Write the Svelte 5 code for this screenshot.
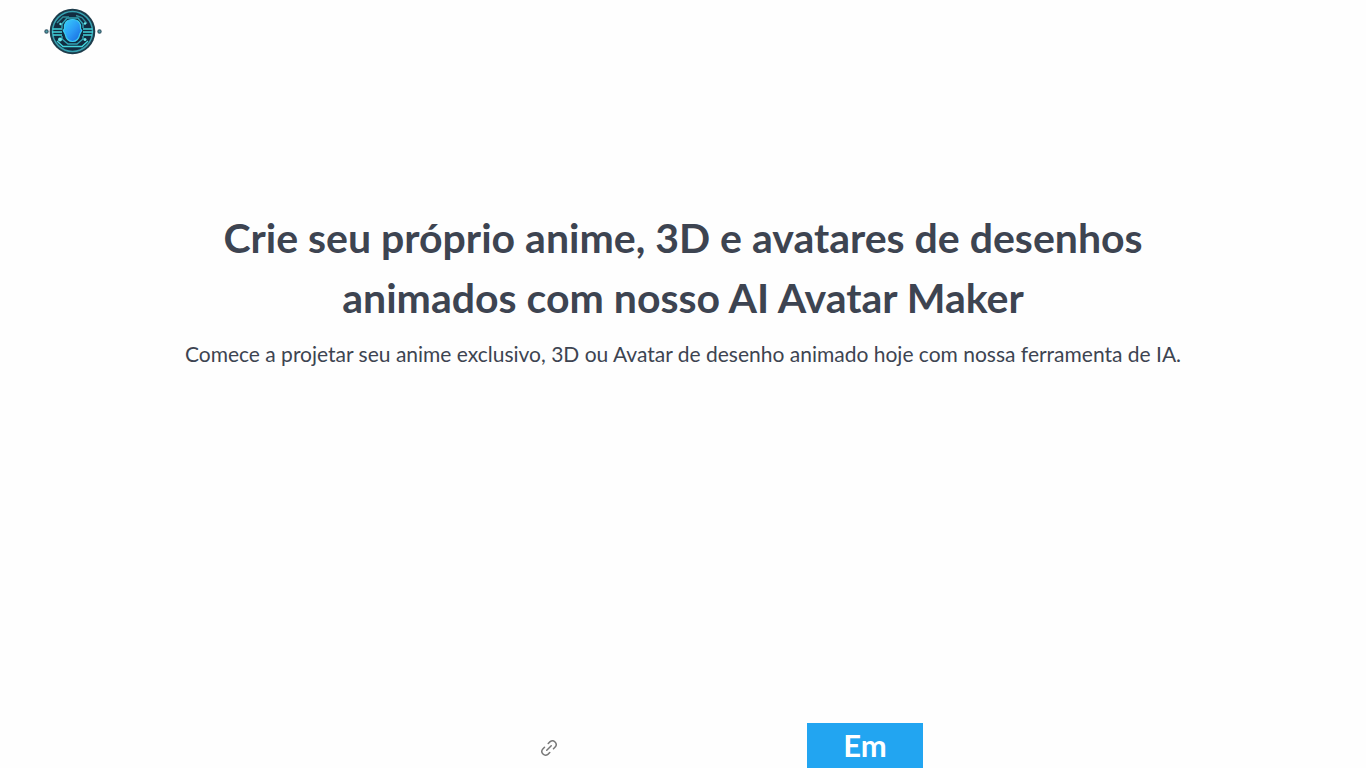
<script lang="ts">
	const title = 'Crie seu próprio anime, 3D e avatares de desenhos animados com nosso AI Avatar Maker';
	const subtitle =
		'Comece a projetar seu anime exclusivo, 3D ou Avatar de desenho animado hoje com nossa ferramenta de IA.';
</script>

<div class="page">
	<header class="topbar">
		<a class="brand" href="/" aria-label="AI Avatar Maker">
			<svg viewBox="0 0 60 48" width="60" height="48" aria-hidden="true">
				<defs>
					<linearGradient id="face" x1="0" y1="0" x2="1" y2="1">
						<stop offset="0" stop-color="#38d0fa" />
						<stop offset="0.5" stop-color="#2b9df5" />
						<stop offset="1" stop-color="#1762dc" />
					</linearGradient>
				</defs>
				<circle cx="29.5" cy="23.5" r="22.8" fill="#1d3c4b" />
				<circle cx="29.5" cy="23.5" r="20" fill="#122c40" stroke="#36a0b0" stroke-width="1.5" />
				<g fill="none" stroke="#43d4dc" stroke-width="1.4">
					<path d="M9.5 21h10M9 24h10M10 27h9M40 21h9.5M40 24h10M40 27h9" />
					<path d="M19 20v-4l5-6h11l5 6v4M19 28v3l6 5h9l6-5v-3" stroke="#2fa3b4" />
					<path d="M14 33l6 5.500h19l6-5.500" />
					<path d="M14 15l6-6h6M33 7.500l6 2 5 6" stroke="#318f9c" />
				</g>
				<path
					d="M29.500 11.500c-6 0-8.800 4-8 9l-1.200 2 1.800 3.500c1 4.500 3.600 7.500 7.400 7.500s6.400-3 7.400-7.500l1.800-3.500-1.200-2c.8-5-2-9-8-9z"
					fill="url(#face)"
					stroke="#3bcdf0"
					stroke-width="1.2"
				/>
				<g fill="#6ae8e8">
					<circle cx="17" cy="31.5" r="2" />
					<circle cx="42" cy="31.5" r="1.5" />
					<circle cx="17.5" cy="16" r="1.2" />
					<circle cx="42" cy="15.5" r="1.2" />
				</g>
				<g fill="#4aa5ac" stroke="#36596a" stroke-width="1.2">
					<circle cx="3.5" cy="23.5" r="1.6" />
					<circle cx="56.5" cy="23.5" r="1.6" />
				</g>
			</svg>
		</a>
	</header>

	<main class="hero">
		<h1>{title}</h1>
		<p>{subtitle}</p>
	</main>

	<div class="create-bar">
		<button type="button" class="link-button" aria-label="Link">
			<svg viewBox="0 0 24 24" width="18" height="18" aria-hidden="true">
				<path
					d="M9 15l6-6M11 6l2.5-2.5a5 5 0 0 1 7 7L18 13M13 18l-2.5 2.5a5 5 0 0 1-7-7L6 11"
					fill="none"
					stroke="#777777"
					stroke-width="2"
					stroke-linecap="round"
				/>
			</svg>
		</button>
		<button type="button" class="create-button">Em</button>
	</div>
</div>

<style>
	:global(body) {
		margin: 0;
		background: #fefefe;
	}

	.page {
		min-height: 100vh;
		display: flex;
		flex-direction: column;
		font-family: Lato, 'Noto Sans', sans-serif;
		color: #3d4451;
	}

	.topbar {
		display: flex;
		align-items: center;
		height: 64px;
		padding: 0 43px;
	}

	.brand {
		display: flex;
	}

	.hero {
		flex: 1;
		padding: 144px 160px 0;
		text-align: center;
	}

	h1 {
		margin: 0;
		font-size: 41px;
		line-height: 60px;
		font-weight: 700;
	}

	p {
		margin: 12px 0 0;
		font-size: 21px;
		line-height: 28px;
	}

	.create-bar {
		display: flex;
		justify-content: center;
		gap: 249px;
		padding-left: 97px;
	}

	button {
		border: none;
		padding: 0;
		font-family: inherit;
		cursor: pointer;
	}

	.link-button {
		display: flex;
		align-items: center;
		padding-top: 4px;
		background: transparent;
	}

	.create-button {
		width: 116px;
		height: 45px;
		background: #22a5f1;
		color: #ffffff;
		font-size: 31px;
		line-height: 45px;
		font-weight: 700;
	}
</style>
